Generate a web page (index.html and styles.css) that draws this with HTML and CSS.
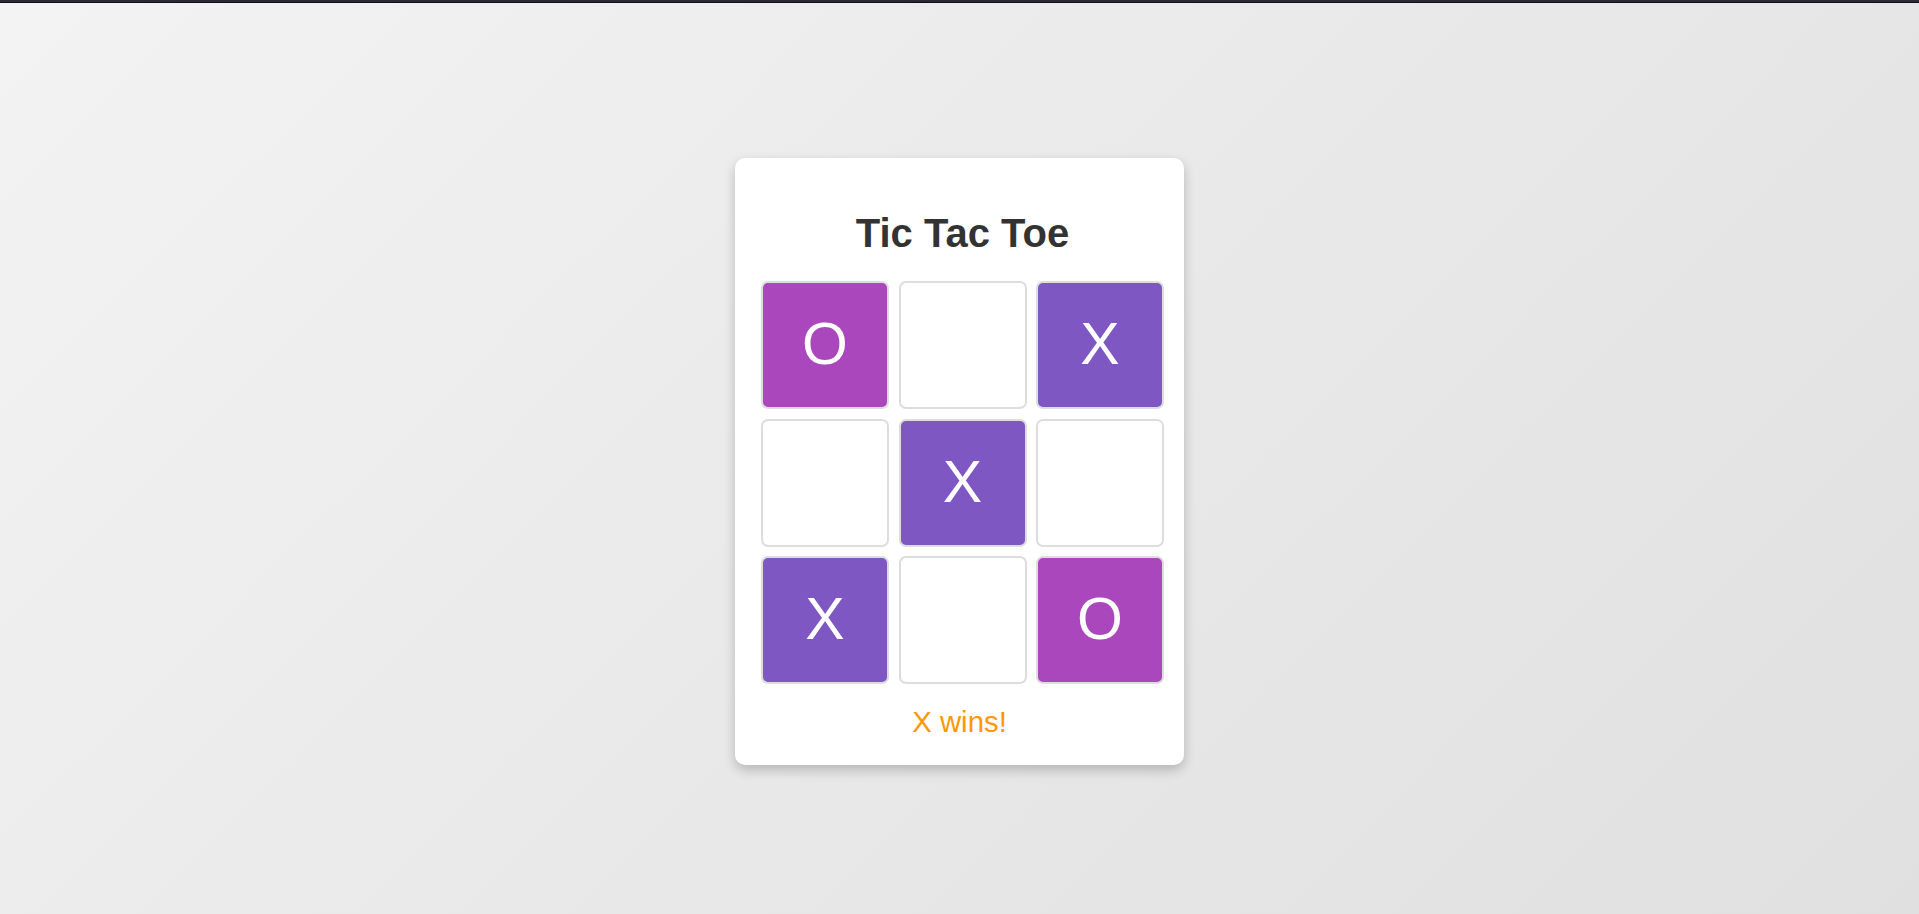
FILE: index.html
```html
<!DOCTYPE html>
<html lang="en">
<head>
<meta charset="utf-8">
<title>Tic Tac Toe</title>
<link rel="stylesheet" href="styles.css">
</head>
<body>
<div class="topbar"></div>
<main class="page">
  <section class="card">
    <h1 class="title">Tic Tac Toe</h1>
    <div class="board">
      <div class="cell cell-o">O</div>
      <div class="cell"></div>
      <div class="cell cell-x">X</div>
      <div class="cell"></div>
      <div class="cell cell-x">X</div>
      <div class="cell"></div>
      <div class="cell cell-x">X</div>
      <div class="cell"></div>
      <div class="cell cell-o">O</div>
    </div>
    <p class="status">X wins!</p>
  </section>
</main>
</body>
</html>
```

FILE: styles.css
```css
* {
  box-sizing: border-box;
}

html, body {
  margin: 0;
  padding: 0;
  height: 100%;
}

body {
  font-family: "Liberation Sans", Arial, sans-serif;
  background: linear-gradient(135deg, #f3f3f3 0%, #e9e9e9 50%, #e0e0e0 100%);
  overflow: hidden;
}

.topbar {
  height: 3px;
  background: #2a2a32;
  border-bottom: 1px solid #101014;
}

.page {
  display: flex;
  justify-content: center;
  padding-top: 155px;
}

.card {
  width: 449px;
  background: #ffffff;
  border-radius: 10px;
  box-shadow: 0 5px 12px rgba(0, 0, 0, 0.22);
  padding: 24px 20px 26px 26px;
}

.title {
  margin: 28px 0 25px;
  font-size: 40px;
  line-height: 46px;
  font-weight: 700;
  color: #333333;
  text-align: center;
}

.board {
  display: grid;
  grid-template-columns: repeat(3, 128px);
  grid-template-rows: repeat(3, 128px);
  gap: 9.5px;
}

.cell {
  border: 2px solid #dddddd;
  border-radius: 7px;
  background: #ffffff;
  display: flex;
  align-items: center;
  justify-content: center;
  color: #ffffff;
  font-size: 59px;
  line-height: 1.15;
}

.cell-o {
  background: #ab47bc;
}

.cell-x {
  background: #7e57c2;
}

.status {
  margin: 21px 0 0;
  font-size: 29.4px;
  line-height: 34px;
  color: #ff9800;
  text-align: center;
  padding-right: 6px;
}
```
